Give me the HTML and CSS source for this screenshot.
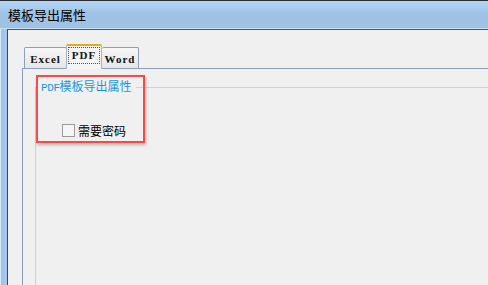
FILE: index.html
```html
<!DOCTYPE html>
<html lang="zh-CN">
<head>
    <meta charset="UTF-8">
    <title>模板导出属性</title>
    <link rel="stylesheet" href="styles.css">
</head>
<body>
    <div class="window">
        <div class="title-bar">模板导出属性</div>
        <div class="client">
            <div class="tabs">
                <div class="tab tab-excel">Excel</div>
                <div class="tab tab-pdf active"><span class="focus">PDF</span></div>
                <div class="tab tab-word">Word</div>
            </div>
            <div class="tab-panel">
                <fieldset class="group">
                    <legend><span class="mono">PDF</span>模板导出属性</legend>
                    <label class="check-row">
                        <span class="checkbox"></span>
                        <span>需要密码</span>
                    </label>
                </fieldset>
            </div>
        </div>
    </div>
    <!-- annotation box drawn over the group -->
    <div class="highlight"></div>
</body>
</html>
```

FILE: styles.css
```css
body {
    margin: 0;
    padding: 0;
    width: 488px;
    height: 285px;
    overflow: hidden;
    background: #a4c7ea;
    font-family: "Noto Sans CJK SC", "Noto Sans", sans-serif;
    font-size: 12px;
}

.window {
    display: flex;
    flex-direction: column;
    height: 285px;
    border-top: 1px solid #2a2f36;
    box-sizing: border-box;
    background: linear-gradient(to right, #dbeaf8 0, #dbeaf8 1px, #9cc2ea 1px, #a8cbee 7px);
}

.title-bar {
    height: 28px;
    line-height: 28px;
    padding-left: 8px;
    font-size: 13px;
    color: #000;
    background: linear-gradient(to bottom, #b6d6f5 0, #aacdf0 6px, #9fc3e5 12px, #9fc2e3 100%);
    box-shadow: inset 0 -1px 0 #c8def2;
}

.client {
    flex: 1;
    min-height: 0;
    display: flex;
    flex-direction: column;
    margin-left: 7px;
    border-top: 1px solid #4d5866;
    border-left: 1px solid #3e4650;
    background: #f0f0f0;
    padding: 14px 0 0 14px;
    overflow: hidden;
}

.tabs {
    display: flex;
    align-items: flex-end;
    padding-left: 2px;
    height: 24px;
}

.tab {
    box-sizing: border-box;
    height: 21px;
    padding-top: 2px;
    border: 1px solid #8c9fb9;
    border-bottom: none;
    border-radius: 2px 2px 0 0;
    background: linear-gradient(to bottom, #f6f6f6, #e6e6e6);
    font-family: "Liberation Serif", serif;
    font-weight: bold;
    font-size: 11px;
    letter-spacing: 1px;
    color: #111;
    text-align: center;
    line-height: 18px;
}

.tab-excel { width: 43px; }
.tab-word { width: 37px; border-left: none; }

.tab-pdf {
    width: 36px;
    height: 25px;
    padding-top: 1px;
    border-top: 2px solid #e6a91f;
    border-left: 1px solid #a8b4c4;
    border-right: 1px solid #a8b4c4;
    background: #f4f4f4;
    margin-left: -1px;
    margin-bottom: -1px;
    position: relative;
    z-index: 1;
}

.focus {
    display: block;
    margin: 0 1px;
    height: 15px;
    line-height: 15px;
    border: 1px dotted #4a4a8a;
}

.tab-panel {
    flex: 1;
    min-height: 0;
    display: flex;
    flex-direction: column;
    border-top: 1px solid #8a9fb8;
    border-left: 1px solid #8a9cb8;
}

.group {
    flex: 1;
    min-height: 0;
    margin: 10px 0 0 12px;
    padding: 29px 0 0 0;
    border: 0;
    border-top: 1px solid #d2d2d2;
    border-left: 1px solid #cfcfcf;
}

.group legend {
    padding: 0 4px 0 5px;
    line-height: 14px;
    color: #1a98de;
}

.mono {
    font-family: "Liberation Mono", monospace;
    font-size: 11px;
    letter-spacing: -0.4px;
}

.check-row {
    display: flex;
    align-items: center;
    gap: 3px;
    margin-left: 26px;
    height: 13px;
    color: #000;
}

.checkbox {
    width: 11px;
    height: 11px;
    border: 1px solid #9a9a9a;
    background: #f6f6f6;
}

.highlight {
    position: absolute;
    left: 36px;
    top: 75px;
    width: 109px;
    height: 68px;
    box-sizing: border-box;
    border: 2px solid #f24b4b;
    box-shadow: 1px 2px 3px rgba(0, 0, 0, 0.25);
}
```
